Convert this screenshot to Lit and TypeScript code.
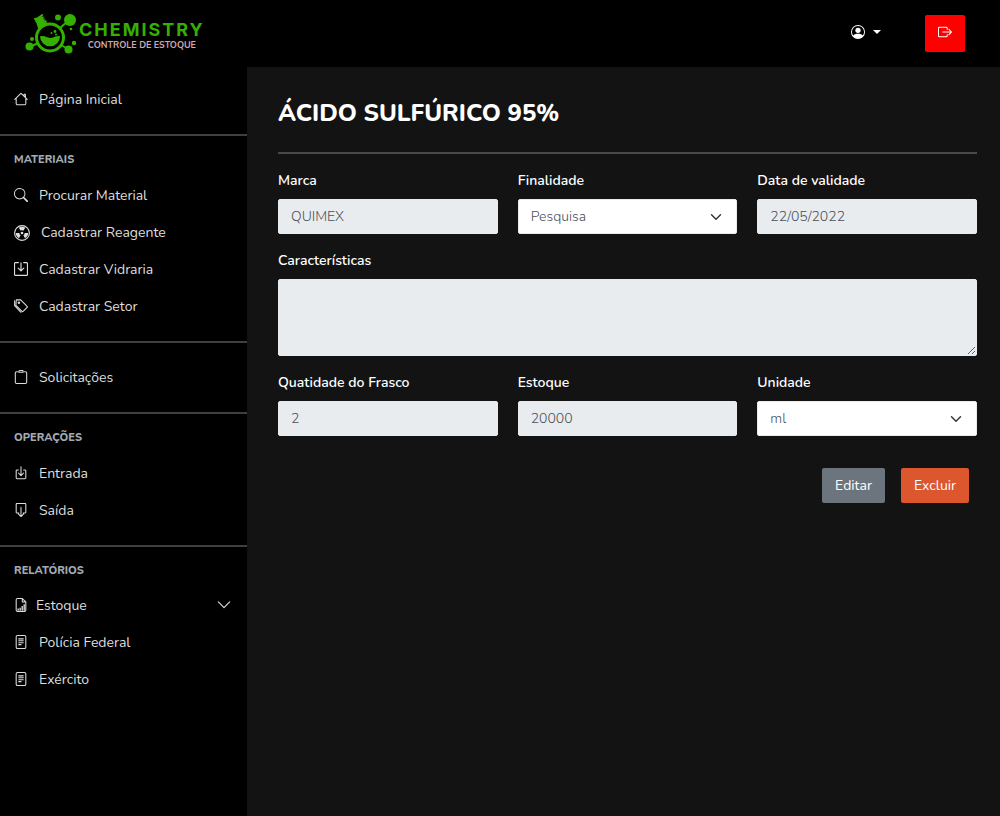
import { LitElement, html, svg, css, nothing } from "lit";
import { customElement, property } from "lit/decorators.js";

const stroke = (d: string, width = 1.2) =>
  svg`<path d=${d} fill="none" stroke="currentColor" stroke-width=${width} stroke-linecap="round" stroke-linejoin="round" />`;

const icons: Record<string, unknown> = {
  house: svg`${stroke("M2.5 7.5v6a1 1 0 0 0 1 1h9a1 1 0 0 0 1-1v-6M.9 8.5 7.6 1.8a.6.6 0 0 1 .8 0l6.7 6.7M11.500 4V2.500h1.500V6")}`,
  search: svg`<path fill="currentColor" d="M11.742 10.344a6.5 6.5 0 1 0-1.397 1.398h-.001c.03.04.062.078.098.115l3.85 3.85a1 1 0 0 0 1.415-1.414l-3.85-3.85a1.007 1.007 0 0 0-.115-.1zM12 6.5a5.5 5.5 0 1 1-11 0 5.5 5.5 0 0 1 11 0z" />`,
  radioactive: svg`<circle cx="8" cy="8" r="7.400" fill="none" stroke="currentColor" stroke-width="1.100" /><circle cx="8" cy="8" r="1.300" fill="currentColor" /><path fill="currentColor" d="M9.300 5.700A2.600 2.600 0 0 0 8 5.300c-.5 0-.9.100-1.300.4L4.700 2.700A6.200 6.200 0 0 1 8 1.800c1.200 0 2.400.4 3.300.9zM10.700 8a2.600 2.600 0 0 1-1.300 2.300l1.600 3A6.200 6.200 0 0 0 14.200 8zM6.600 10.300A2.600 2.600 0 0 1 5.300 8H1.800A6.200 6.200 0 0 0 5 13.300z" />`,
  boxIn: svg`${stroke("M5 .7H1.500a.9.9 0 0 0-.9.9v12.800a.9.9 0 0 0 .9.9h13a.9.9 0 0 0 .9-.9V1.600a.9.9 0 0 0-.9-.9H11M8 1v9M4.800 7 8 10.200 11.200 7", 1.3)}`,
  tags: svg`${stroke("M2.600 1h5l7.400 7.400a.9.9 0 0 1 0 1.200l-4.600 4.600a.9.9 0 0 1-1.200 0L2.200 7.200zM.7 2v5.700l7.300 7.500")}<circle cx="5.600" cy="4.300" r="1.400" fill="currentColor" />`,
  clipboard: svg`${stroke("M4 2H3a1.500 1.500 0 0 0-1.500 1.500V14A1.500 1.500 0 0 0 3 15.400h10a1.500 1.500 0 0 0 1.500-1.400V3.500A1.500 1.500 0 0 0 13 2h-1M6.500.6h3a1 1 0 0 1 1 1v1h-5v-1a1 1 0 0 1 1-1z")}`,
  boxArrowInDown: svg`${stroke("M5 4.500H3.500a1 1 0 0 0-1 1v8a1 1 0 0 0 1 1h9a1 1 0 0 0 1-1v-8a1 1 0 0 0-1-1H11M8 1v9.500M5 8l3 3 3-3")}`,
  boxArrowDown: svg`${stroke("M5.500 11.500h-2a1 1 0 0 1-1-1v-9a1 1 0 0 1 1-1h9a1 1 0 0 1 1 1v9a1 1 0 0 1-1 1h-2M8 5v10M5 12.500l3 3 3-3")}`,
  report: svg`${stroke("M9.500.6H4A1.500 1.500 0 0 0 2.500 2v12A1.500 1.500 0 0 0 4 15.400h8a1.500 1.500 0 0 0 1.500-1.400V4.500zM9.500.6v4h4")}<path fill="currentColor" d="M4 12h1.500v2.500H4zM6.300 11h1.500v3.500H6.300zM8.600 9h1.500v5.500H8.600zM10.900 7h1.500v7.500h-1.500z" />`,
  file: svg`<rect x="2.500" y=".6" width="11" height="14.800" rx="1.500" fill="none" stroke="currentColor" stroke-width="1.200" /><path fill="currentColor" d="M5 3.800h6V5H5zM5 6h6v1.200H5zM5 8.200h6v1.200H5zM5 10.400h3.500v1.200H5z" />`,
  chevron: svg`${stroke("M1.500 4.500 8 11l6.500-6.500", 1.3)}`,
  person: svg`<path fill="currentColor" d="M8 0a8 8 0 1 0 0 16A8 8 0 0 0 8 0zm0 1.200a6.800 6.800 0 0 1 5.500 10.800C12.500 10.700 10.700 10 8 10s-4.500.7-5.500 2A6.800 6.800 0 0 1 8 1.200z" fill-rule="evenodd" /><circle cx="8" cy="6" r="3" fill="currentColor" />`,
  logout: svg`${stroke("M10.500 5V3.500a1 1 0 0 0-1-1h-8a1 1 0 0 0-1 1v9a1 1 0 0 0 1 1h8a1 1 0 0 0 1-1V11M5.500 8h10M12.500 5l3 3-3 3")}`,
};

const icon = (name: string, cls = "icon") =>
  html`<svg class=${cls} viewBox="0 0 16 16" aria-hidden="true">${icons[name]}</svg>`;

const font = css`
  :host {
    font-family: Nunito, Lato, "Open Sans", sans-serif;
    font-size: 14px;
    line-height: 22px;
  }
  * {
    box-sizing: border-box;
  }
`;

@customElement("app-topbar")
class AppTopbar extends LitElement {
  static styles = [
    font,
    css`
      .bar {
        display: flex;
        align-items: center;
        height: 67px;
        padding: 0 35px 0 25px;
        background: #000;
      }
      .logo {
        display: flex;
        align-items: center;
        gap: 2px;
        text-decoration: none;
      }
      .mark {
        width: 52px;
        height: 42px;
      }
      .words {
        display: flex;
        flex-direction: column;
        align-items: center;
        padding-top: 3px;
      }
      .name {
        font: 700 18px/20px Inter, sans-serif;
        letter-spacing: 2px;
        color: #35b000;
      }
      .sub {
        font: 700 9px/11px Nunito, Lato, sans-serif;
        color: #cfa9b3;
      }
      .user {
        display: flex;
        align-items: center;
        gap: 8px;
        margin-left: auto;
        margin-right: 44px;
        padding: 0 0 4px;
        border: 0;
        background: none;
        color: #fff;
      }
      .icon {
        display: block;
        width: 14px;
        height: 14px;
      }
      .caret {
        border: 4px solid transparent;
        border-top-color: #fff;
        border-bottom: 0;
      }
      .exit {
        display: grid;
        place-items: center;
        width: 40px;
        height: 37px;
        padding: 0 0 4px;
        border: 0;
        border-radius: 2px;
        background: #f00;
        color: #fff;
      }
    `,
  ];

  render() {
    return html`<header class="bar">
      <a class="logo" href="#">
        <svg class="mark" viewBox="0 0 52 42" aria-hidden="true">
          <g fill="#35b000">
            <circle cx="45" cy="7" r="6" />
            <circle cx="33" cy="4.500" r="3" />
            <circle cx="46" cy="16" r="1.300" />
            <circle cx="49" cy="30" r="2.200" />
            <circle cx="43.500" cy="36.500" r="4" />
            <circle cx="4.500" cy="33.500" r="4" />
            <circle cx="7" cy="26" r="2" />
            <path d="m8.700 5.200 3.300-.7 5-3.500 1.500.8-1.500 2.200 2.500-.5-1.500 2.200 2.500-.2-1.500 2 2.500-.3.5 5-8.500 5-2-7z" />
            <path d="M15 23.500c5-1.500 7 2 11 1.500 3-.5 5-2.500 9-2a10 10 0 0 1-20 .5z" />
            <circle cx="30" cy="18.500" r="1.400" />
            <circle cx="26.500" cy="20" r="1" />
            <circle cx="31" cy="21.500" r="1" />
          </g>
          <circle cx="25" cy="24.500" r="13.500" fill="none" stroke="#35b000" stroke-width="3" />
          <path d="m35 15 8-7M36 32l7 4M13 30l-8 4" stroke="#35b000" stroke-width="2" />
        </svg>
        <span class="words">
          <span class="name">CHEMISTRY</span>
          <span class="sub">CONTROLE DE ESTOQUE</span>
        </span>
      </a>
      <button class="user" aria-label="Conta">${icon("person")}<span class="caret"></span></button>
      <button class="exit" aria-label="Sair">${icon("logout")}</button>
    </header>`;
  }
}

interface Item {
  icon: string;
  text: string;
  kind?: "wide" | "expand";
}

const groups: { title?: string; items: Item[] }[] = [
  { items: [{ icon: "house", text: "Página Inicial" }] },
  {
    title: "MATERIAIS",
    items: [
      { icon: "search", text: "Procurar Material" },
      { icon: "radioactive", text: "Cadastrar Reagente", kind: "wide" },
      { icon: "boxIn", text: "Cadastrar Vidraria" },
      { icon: "tags", text: "Cadastrar Setor" },
    ],
  },
  { items: [{ icon: "clipboard", text: "Solicitações" }] },
  {
    title: "OPERAÇÕES",
    items: [
      { icon: "boxArrowInDown", text: "Entrada" },
      { icon: "boxArrowDown", text: "Saída" },
    ],
  },
  {
    title: "RELATÓRIOS",
    items: [
      { icon: "report", text: "Estoque", kind: "expand" },
      { icon: "file", text: "Polícia Federal" },
      { icon: "file", text: "Exército" },
    ],
  },
];

@customElement("app-sidebar")
class AppSidebar extends LitElement {
  static styles = [
    font,
    css`
      :host {
        display: block;
        padding-top: 14px;
        background: #000;
      }
      .group {
        padding-bottom: 16px;
      }
      .group + .group {
        border-top: 2px solid #404040;
        padding-top: 16px;
      }
      .title {
        margin: 0 14px;
        padding: 1px 0 10px;
        font-size: 11px;
        line-height: 14px;
        font-weight: 800;
        color: #a3abb3;
      }
      .item {
        display: flex;
        align-items: center;
        gap: 11px;
        width: 100%;
        height: 37px;
        padding: 0 16px 0 14px;
        border: 0;
        background: none;
        font: inherit;
        color: #dedede;
        text-decoration: none;
      }
      .item.expand {
        gap: 8px;
        height: 36px;
      }
      .icon,
      .chevron {
        width: 14px;
        height: 14px;
        margin-bottom: 2px;
      }
      .wide .icon {
        width: 16px;
        height: 16px;
        margin-bottom: 0;
      }
      .chevron {
        margin-left: auto;
      }
    `,
  ];

  private row(i: Item) {
    return i.kind === "expand"
      ? html`<button class="item expand" aria-expanded="false">${icon(i.icon)}${i.text}${icon("chevron", "chevron")}</button>`
      : html`<a class="item ${i.kind ?? ""}" href="#">${icon(i.icon)}${i.text}</a>`;
  }

  render() {
    return html`<nav>
      ${groups.map(
        (g) => html`<section class="group">
          ${g.title ? html`<h2 class="title">${g.title}</h2>` : nothing} ${g.items.map((i) => this.row(i))}
        </section>`
      )}
    </nav>`;
  }
}

@customElement("app-field")
class AppField extends LitElement {
  @property() label = "";
  @property() value = "";
  @property() kind: "text" | "select" | "area" = "text";

  static styles = [
    font,
    css`
      :host {
        display: block;
        min-width: 0;
      }
      .label {
        display: block;
        padding: 1px 0 7px;
        font-weight: 600;
        color: #fff;
      }
      .control {
        display: block;
        width: 100%;
        height: 35px;
        padding: 0 12px;
        border: 1px solid #e9ecef;
        border-radius: 2px;
        background: #e9ecef;
        font: 300 14px/22px Nunito, Lato, sans-serif;
        color: #495057;
      }
      .area {
        height: 77px;
        padding: 6px 12px;
        resize: vertical;
      }
      .select {
        appearance: none;
        background: #fff
          url("data:image/svg+xml,%3Csvg xmlns='http://www.w3.org/2000/svg' viewBox='0 0 16 16'%3E%3Cpath fill='none' stroke='%23343a40' stroke-linecap='round' stroke-linejoin='round' stroke-width='2' d='M2 5l6 6 6-6'/%3E%3C/svg%3E")
          no-repeat right 14px center / 12px;
      }
    `,
  ];

  private control() {
    if (this.kind === "select")
      return html`<select id="c" class="control select"><option>${this.value}</option></select>`;
    if (this.kind === "area") return html`<textarea id="c" class="control area" readonly></textarea>`;
    return html`<input id="c" class="control" .value=${this.value} readonly />`;
  }

  render() {
    return html`<label class="label" for="c">${this.label}</label>${this.control()}`;
  }
}

@customElement("app-root")
class AppRoot extends LitElement {
  static styles = [
    font,
    css`
      :host {
        display: flex;
        flex-direction: column;
        min-height: 100vh;
        background: #000;
      }
      .body {
        display: grid;
        grid-template-columns: 247px 1fr;
        flex: 1;
      }
      .main {
        padding: 31px 23px 30px 31px;
        background: #131313;
        color: #fff;
      }
      .heading {
        margin: 0;
        padding-bottom: 24px;
        border-bottom: 2px solid #4a4a4a;
        font-size: 24px;
        line-height: 30px;
        font-weight: 800;
      }
      .fields {
        display: grid;
        grid-template-columns: repeat(3, 1fr);
        gap: 15px 20px;
        padding-top: 15px;
      }
      .full {
        grid-column: 1 / -1;
      }
      .actions {
        display: flex;
        justify-content: flex-end;
        gap: 16px;
        padding: 32px 8px 0 0;
      }
      .btn {
        height: 35px;
        padding: 0 13px;
        border: 0;
        border-radius: 2px;
        font: inherit;
        color: #fff;
        background: #6c757d;
      }
      .danger {
        background: #dc562e;
      }
    `,
  ];

  render() {
    return html`<app-topbar></app-topbar>
      <div class="body">
        <app-sidebar></app-sidebar>
        <main class="main">
          <h1 class="heading">ÁCIDO SULFÚRICO 95%</h1>
          <div class="fields">
            <app-field label="Marca" value="QUIMEX"></app-field>
            <app-field label="Finalidade" value="Pesquisa" kind="select"></app-field>
            <app-field label="Data de validade" value="22/05/2022"></app-field>
            <app-field class="full" label="Características" kind="area"></app-field>
            <app-field label="Quatidade do Frasco" value="2"></app-field>
            <app-field label="Estoque" value="20000"></app-field>
            <app-field label="Unidade" value="ml" kind="select"></app-field>
          </div>
          <div class="actions">
            <button class="btn">Editar</button>
            <button class="btn danger">Excluir</button>
          </div>
        </main>
      </div>`;
  }
}
